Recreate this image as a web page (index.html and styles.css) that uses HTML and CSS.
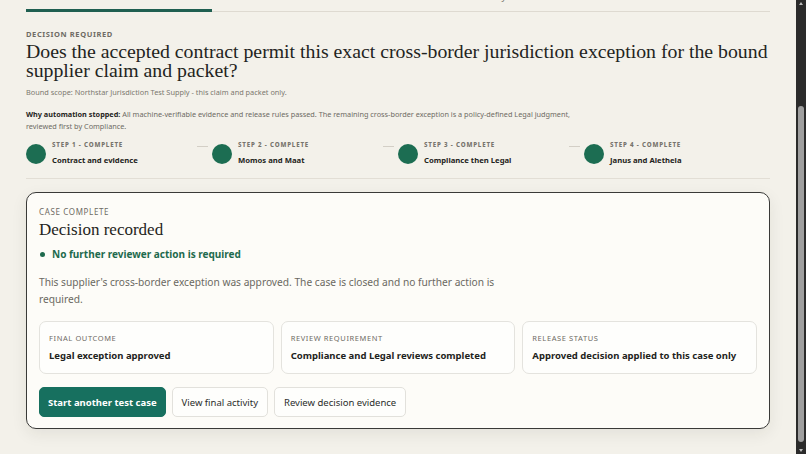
FILE: index.html
```html
<!DOCTYPE html>
<html lang="en">
<head>
<meta charset="utf-8">
<title>Decision</title>
<link rel="stylesheet" href="styles.css">
</head>
<body>
<div class="viewport">
  <div class="content">
    <nav class="tabs">
      <div class="tab active">Decision</div>
      <div class="tab">Documents</div>
      <div class="tab">Activity</div>
      <div class="tab">Technical audit</div>
    </nav>

    <div class="eyebrow">DECISION REQUIRED</div>
    <h1 class="title">Does the accepted contract permit this exact cross-border jurisdiction exception for the bound supplier claim and packet?</h1>
    <p class="scope">Bound scope: Northstar Jurisdiction Test Supply - this claim and packet only.</p>
    <p class="why"><strong>Why automation stopped:</strong> All machine-verifiable evidence and release rules passed. The remaining cross-border exception is a policy-defined Legal judgment, reviewed first by Compliance.</p>

    <div class="steps">
      <div class="step">
        <span class="dot"></span>
        <div class="step-text"><div class="step-label">STEP 1 - COMPLETE</div><div class="step-name">Contract and evidence</div></div>
        <span class="dash"></span>
      </div>
      <div class="step">
        <span class="dot"></span>
        <div class="step-text"><div class="step-label">STEP 2 - COMPLETE</div><div class="step-name">Momos and Maat</div></div>
        <span class="dash"></span>
      </div>
      <div class="step">
        <span class="dot"></span>
        <div class="step-text"><div class="step-label">STEP 3 - COMPLETE</div><div class="step-name">Compliance then Legal</div></div>
        <span class="dash"></span>
      </div>
      <div class="step">
        <span class="dot"></span>
        <div class="step-text"><div class="step-label">STEP 4 - COMPLETE</div><div class="step-name">Janus and Aletheia</div></div>
      </div>
    </div>

    <section class="card">
      <div class="card-eyebrow">CASE COMPLETE</div>
      <h2 class="card-title">Decision recorded</h2>
      <div class="status"><span class="status-dot"></span>No further reviewer action is required</div>
      <p class="summary">This supplier's cross-border exception was approved. The case is closed and no further action is required.</p>
      <div class="facts">
        <div class="fact"><div class="fact-label">FINAL OUTCOME</div><div class="fact-value">Legal exception approved</div></div>
        <div class="fact"><div class="fact-label">REVIEW REQUIREMENT</div><div class="fact-value">Compliance and Legal reviews completed</div></div>
        <div class="fact"><div class="fact-label">RELEASE STATUS</div><div class="fact-value">Approved decision applied to this case only</div></div>
      </div>
      <div class="actions">
        <button class="btn primary">Start another test case</button>
        <button class="btn">View final activity</button>
        <button class="btn">Review decision evidence</button>
      </div>
    </section>
  </div>
</div>
<div class="scrollbar">
  <div class="arrow up"></div>
  <div class="track"><div class="thumb"></div></div>
  <div class="arrow down"></div>
</div>
</body>
</html>
```
FILE: styles.css
```css
html, body {
  margin: 0;
  height: 454px;
  overflow: hidden;
}
body {
  display: flex;
  background: #f3f1ea;
  font-family: "Noto Sans", "Open Sans", sans-serif;
  color: #222;
}
.viewport {
  flex: 1;
  overflow: hidden;
}
.content {
  width: 744px;
  margin: 0 auto;
}
.tabs {
  display: grid;
  grid-template-columns: repeat(4, 1fr);
  margin-top: -9px;
}
.tab {
  text-align: center;
  font-size: 9px;
  line-height: 12px;
  color: #77746d;
  padding-bottom: 8px;
  border-bottom: 1px solid #dedad1;
}
.tab.active {
  color: #1f2a26;
  font-weight: 700;
  border-bottom: 3px solid #1f5f51;
  padding-bottom: 6px;
}
.eyebrow {
  margin-top: 17px;
  font-size: 7.5px;
  line-height: 10px;
  font-weight: 700;
  letter-spacing: 0.08em;
  color: #6e6b64;
}
.title {
  margin: 3px 0 0;
  font-family: "Liberation Serif", "Times New Roman", serif;
  font-weight: 400;
  font-size: 19.8px;
  line-height: 19px;
  color: #1f2421;
}
.scope {
  margin: 7px 0 0;
  font-size: 7.35px;
  line-height: 10px;
  color: #7b786f;
}
.why {
  margin: 11px 0 0;
  max-width: 560px;
  font-size: 7.3px;
  line-height: 12px;
  color: #6e6b64;
}
.why strong {
  color: #1f2421;
}
.steps {
  display: grid;
  grid-template-columns: repeat(4, 1fr);
  margin-top: 9px;
  padding-bottom: 12px;
  border-bottom: 1px solid #e2ded5;
}
.step {
  display: flex;
  align-items: center;
}
.dot {
  width: 20px;
  height: 20px;
  border-radius: 50%;
  background: #1c6d52;
  flex: none;
}
.step-text {
  margin-left: 6px;
  flex: 1;
}
.step-label {
  font-size: 6.2px;
  line-height: 8px;
  font-weight: 800;
  letter-spacing: 0.13em;
  color: #77746d;
}
.step-name {
  margin-top: 6px;
  font-size: 7.7px;
  line-height: 11px;
  font-weight: 700;
  color: #1f2421;
}
.dash {
  align-self: flex-start;
  margin-top: 5px;
  width: 11px;
  height: 1px;
  background: #d3cfc6;
  margin-right: 4px;
  flex: none;
}
.card {
  margin-top: 13px;
  background: #fdfcf8;
  border: 1.5px solid #3a3a38;
  border-radius: 10px;
  padding: 14px 12px 11px;
  box-shadow: 0 5px 16px rgba(40, 35, 20, 0.08);
}
.card-eyebrow {
  font-size: 8px;
  line-height: 10px;
  letter-spacing: 0.08em;
  color: #6e6b64;
}
.card-title {
  margin: 3px 0 0;
  font-family: "Liberation Serif", "Times New Roman", serif;
  font-weight: 400;
  font-size: 17px;
  line-height: 20px;
  color: #1f2421;
}
.status {
  margin-top: 8px;
  display: flex;
  align-items: center;
  font-size: 10px;
  line-height: 12px;
  font-weight: 700;
  color: #1e6a4d;
}
.status-dot {
  width: 5px;
  height: 5px;
  border-radius: 50%;
  background: #1e6a4d;
  margin: 0 7px 0 1px;
}
.summary {
  margin: 14px 0 0;
  max-width: 470px;
  font-size: 10.2px;
  line-height: 17px;
  color: #6b6962;
}
.facts {
  margin-top: 13px;
  display: grid;
  grid-template-columns: repeat(3, 1fr);
  gap: 7px;
}
.fact {
  border: 1px solid #e4e3de;
  border-radius: 7px;
  background: #fefefc;
  padding: 11px 9px 11px;
}
.fact-label {
  font-size: 7.5px;
  line-height: 10px;
  letter-spacing: 0.08em;
  color: #6e6b64;
}
.fact-value {
  margin-top: 7px;
  font-size: 9.5px;
  line-height: 12px;
  font-weight: 700;
  color: #1f2421;
}
.actions {
  margin-top: 13px;
  display: flex;
  gap: 6px;
}
.btn {
  height: 30px;
  padding: 0 9px;
  margin: 0;
  border: 1px solid #e2e1dc;
  border-radius: 5px;
  background: #fefefc;
  font-family: "Noto Sans", "Open Sans", sans-serif;
  font-size: 9.5px;
  color: #2a2d2b;
}
.btn.primary {
  padding: 0 8px;
  background: #17705f;
  border-color: #17705f;
  color: #fff;
  font-weight: 700;
}
.scrollbar {
  width: 10px;
  flex: none;
  background: #2b2b2b;
  display: flex;
  flex-direction: column;
}
.arrow {
  height: 8px;
  position: relative;
}
.arrow::after {
  content: "";
  position: absolute;
  left: 3px;
  border-left: 2px solid transparent;
  border-right: 2px solid transparent;
}
.arrow.up::after {
  top: 2px;
  border-bottom: 3px solid #bdbdbd;
}
.arrow.down::after {
  top: 3px;
  border-top: 3px solid #bdbdbd;
}
.track {
  flex: 1;
  padding: 98px 2px 4px;
  display: flex;
}
.thumb {
  flex: 1;
  background: #9f9f9f;
  border-radius: 3px;
}
```
